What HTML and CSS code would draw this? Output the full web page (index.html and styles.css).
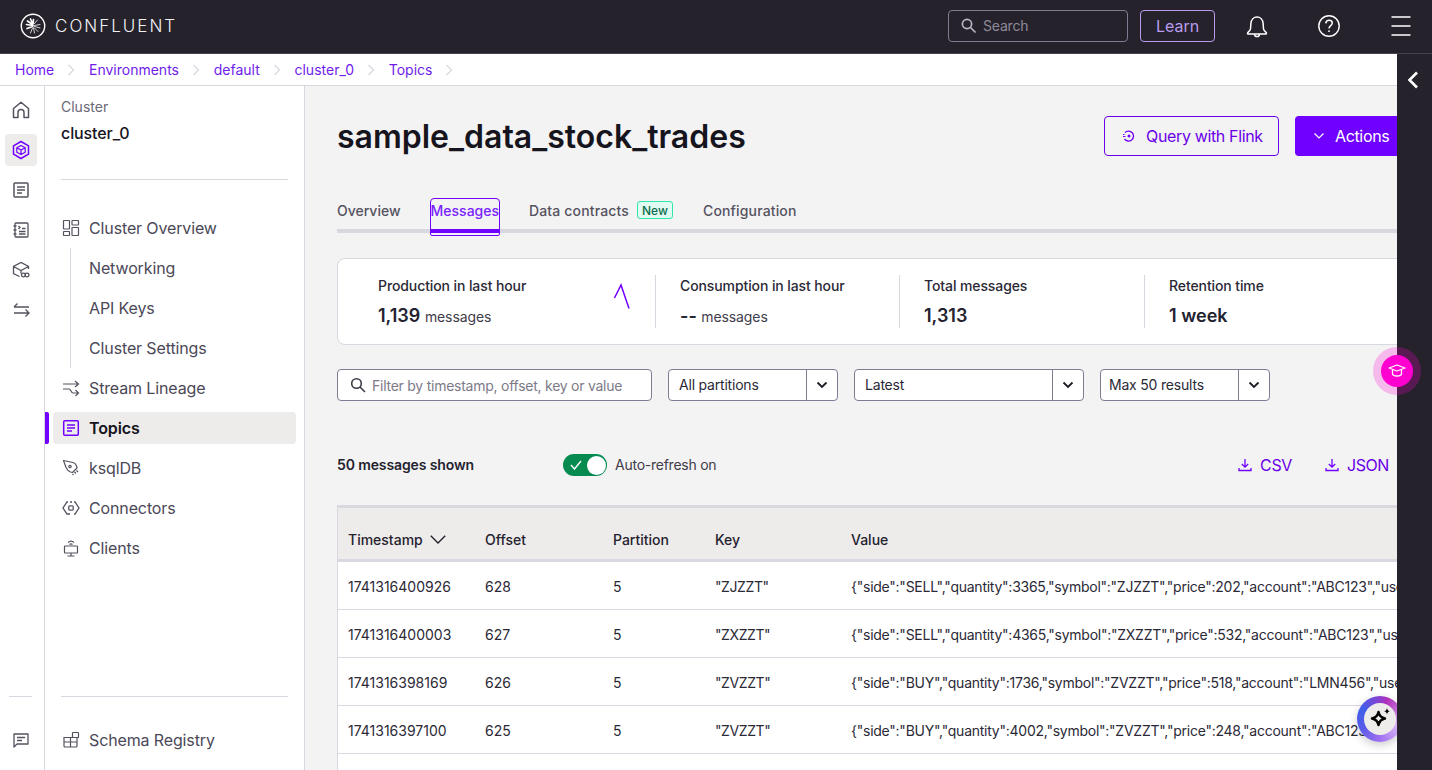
FILE: index.html
```html
<!DOCTYPE html>
<html lang="en">
<head>
<meta charset="utf-8">
<title>sample_data_stock_trades</title>
<link rel="stylesheet" href="styles.css">
</head>
<body>
<div class="app">
  <header class="topbar">
    <div class="brand">
      <svg class="logo" width="26" height="26" viewBox="0 0 26 26" fill="none" stroke="#fff" stroke-linecap="round">
        <circle cx="13" cy="13" r="11.7" stroke-width="1.4"/>
        <g stroke-width="1.7"><path d="M13 12.5 6.500 11.500M12.500 11.500 7.500 8M12.500 13.500 7 15.500M12.500 10.500 10.500 6M13 11 13.500 6.500"/></g>
        <g stroke-width=".8"><path d="M14 11 17.500 7M14.500 12.500 20 11.500M14.500 13.500 20 15M14 14.500 18 18.500M13.500 15 14.500 20M12.500 15 10.500 20"/></g>
      </svg>
      <span class="wordmark">CONFLUENT</span>
    </div>
    <div class="topbar-tools">
      <div class="global-search">
        <svg width="18" height="18" viewBox="0 0 18 18" fill="none" stroke="#b9b6c4" stroke-width="1.7"><circle cx="7" cy="7" r="4.600"/><path d="m10.500 10.500 5 5"/></svg>
        <span>Search</span>
      </div>
      <div class="learn">Learn</div>
      <svg class="tool bell" width="26" height="26" viewBox="0 0 26 26" fill="none" stroke="#fff" stroke-width="1.5" stroke-linejoin="round"><path d="M3.500 20.200c0-1.400 2.800-2 3-4.500l.4-5.200C7.200 6.700 9.800 4 13 4s5.800 2.700 6.100 6.500l.4 5.200c.2 2.500 3 3.100 3 4.500 0 .5-.3.8-.8.8H4.300c-.5 0-.8-.3-.8-.8Z"/><path d="M10.500 21c0 1.500 1.100 2.600 2.500 2.600s2.500-1.100 2.500-2.600"/></svg>
      <svg class="tool help" width="24" height="24" viewBox="0 0 24 24" fill="none" stroke="#fff" stroke-width="1.4"><circle cx="12" cy="12" r="10.200"/><path d="M8.800 9.300c.2-1.900 1.500-3 3.300-3 1.900 0 3.200 1.200 3.200 2.800 0 2.500-3.300 2.600-3.300 5.400" stroke-width="1.5"/><circle cx="12" cy="17.200" r=".9" fill="#fff" stroke="none"/></svg>
      <svg class="tool menu" width="20" height="20" viewBox="0 0 20 20" stroke="#fff" stroke-width="1.400"><path d="M.5 1h19M.5 10h19M.5 19h19"/></svg>
    </div>
  </header>

  <nav class="crumbs">
    <a>Home</a><svg class="sep" width="8" height="12" viewBox="0 0 8 12" fill="none"><path d="m1.500 1 5 5-5 5"/></svg>
    <a>Environments</a><svg class="sep" width="8" height="12" viewBox="0 0 8 12" fill="none"><path d="m1.500 1 5 5-5 5"/></svg>
    <a>default</a><svg class="sep" width="8" height="12" viewBox="0 0 8 12" fill="none"><path d="m1.500 1 5 5-5 5"/></svg>
    <a>cluster_0</a><svg class="sep" width="8" height="12" viewBox="0 0 8 12" fill="none"><path d="m1.500 1 5 5-5 5"/></svg>
    <a>Topics</a><svg class="sep" width="8" height="12" viewBox="0 0 8 12" fill="none"><path d="m1.500 1 5 5-5 5"/></svg>
  </nav>

  <div class="body-row">
    <aside class="rail">
      <div class="rail-item"><svg width="18" height="18" viewBox="0 0 18 18" fill="none" stroke="#55525f" stroke-width="1.500" stroke-linejoin="round"><path d="M1.500 16.500V7.500L9 1.200l7.500 6.300v9H12v-5a3 3 0 0 0-6 0v5Z"/></svg></div>
      <div class="rail-item rail-active"><svg width="18" height="20" viewBox="0 0 18 20" fill="none" stroke="#7000ff" stroke-width="1.500" stroke-linejoin="round"><path d="m9 1.500 7.500 4.300v8.400L9 18.500l-7.500-4.300V5.800Z"/><path d="m9 5.500 4.200 2.300v4.400L9 14.500l-4.200-2.300V7.800ZM4.800 7.800 9 10l4.200-2.200M9 10v4.500" stroke-width="1.200"/></svg></div>
      <div class="rail-item"><svg width="18" height="18" viewBox="0 0 18 18" fill="none" stroke="#55525f" stroke-width="1.500"><rect x="2" y="2" width="14" height="14" rx="1"/><path d="M5 6h8M5 9h8M5 12h5"/></svg></div>
      <div class="rail-item"><svg width="18" height="18" viewBox="0 0 18 18" fill="none" stroke="#55525f" stroke-width="1.300"><rect x="3" y="2" width="13" height="14" rx="1"/><path d="M1.500 5h3M1.500 9h3M1.500 13h3M6.500 5l1.500 1.500-1.500 1.500M10 7.500h3.500M7 10.500h6.500M7 13h6.500"/></svg></div>
      <div class="rail-item"><svg width="18" height="18" viewBox="0 0 18 18" fill="none" stroke="#55525f" stroke-width="1.300"><path d="M7.500 15.500 1.500 12.500V5.500L9 1.500l7.500 4v2.500M1.500 5.500 9 9.500l7.500-4M9 9.500v3"/><rect x="9.500" y="12.200" width="4" height="3.600" rx="1.800"/><rect x="13" y="12.200" width="4" height="3.600" rx="1.800"/></svg></div>
      <div class="rail-item"><svg width="18" height="18" viewBox="0 0 18 18" fill="none" stroke="#55525f" stroke-width="1.300"><path d="M17 6H2M5.500 2.500 2 6M2 12h15M13.500 8.500 17 12l-3.500 3.500"/></svg></div>
      <div class="rail-bottom">
        <svg width="18" height="18" viewBox="0 0 18 18" fill="none" stroke="#55525f" stroke-width="1.300" stroke-linejoin="round"><path d="M2 3h14v10H5l-3 3Z"/><path d="M5 6.500h8M5 9.500h5"/></svg>
      </div>
    </aside>

    <aside class="sidebar">
      <div class="cluster-label">Cluster</div>
      <div class="cluster-name">cluster_0</div>
      <div class="side-rule"></div>
      <ul class="nav">
        <li class="nav-item"><svg width="18" height="18" viewBox="0 0 18 18" fill="none" stroke="#55525f" stroke-width="1.200"><rect x="1.500" y="1.500" width="6" height="8.500" rx=".5"/><rect x="10" y="1.500" width="6.500" height="4.500" rx=".5"/><rect x="1.500" y="12.500" width="6" height="4" rx=".5"/><rect x="10" y="8.500" width="6.500" height="8" rx=".5"/></svg><span>Cluster Overview</span></li>
        <li class="subnav">
          <div class="nav-item sub"><span>Networking</span></div>
          <div class="nav-item sub"><span>API Keys</span></div>
          <div class="nav-item sub"><span>Cluster Settings</span></div>
        </li>
        <li class="nav-item"><svg width="18" height="18" viewBox="0 0 18 18" fill="none" stroke="#55525f" stroke-width="1.200"><path d="M1 5h15M13 2l3.500 3L13 8M1 10h6c2 0 2 4 4 4h5.500M13.500 11l3 3-3 3"/></svg><span>Stream Lineage</span></li>
        <li class="nav-item active"><svg width="18" height="18" viewBox="0 0 18 18" fill="none" stroke="#7000ff" stroke-width="1.500"><rect x="1.700" y="1.700" width="14.600" height="14.600" rx="1"/><path d="M5 6h8M5 9h8M5 12h5"/></svg><span>Topics</span></li>
        <li class="nav-item"><svg width="18" height="18" viewBox="0 0 18 18" fill="none" stroke="#55525f" stroke-width="1.200" stroke-linejoin="round"><path d="M1.500 1.500 11 3.500c1.500.3 3 2 3.500 3.500l.5 2-4.500 4.500-2-.5C7 12.500 5 10.500 4 8.500Z"/><circle cx="8" cy="7.500" r="1.200"/><path d="m12.500 13 1.500 1.500M14.500 11.500 16 13M10.500 15l1 1"/></svg><span>ksqlDB</span></li>
        <li class="nav-item"><svg width="18" height="18" viewBox="0 0 18 18" fill="none" stroke="#55525f" stroke-width="1.300"><path d="M6 3H5L1 9l4 6h3M12 3h1l4 6-4 6h-1M8 3l2 0"/><rect x="6.800" y="6.800" width="4.400" height="4.400" rx="1"/></svg><span>Connectors</span></li>
        <li class="nav-item"><svg width="18" height="18" viewBox="0 0 18 18" fill="none" stroke="#55525f" stroke-width="1.200"><rect x="2.500" y="7" width="13" height="7" rx=".5"/><path d="M9 14v3M5.500 17h7M6 3.500a4.500 4.500 0 0 1 6 0M7.500 5.500a2.200 2.200 0 0 1 3 0"/></svg><span>Clients</span></li>
      </ul>
      <div class="side-bottom">
        <div class="side-rule flush"></div>
        <div class="nav-item"><svg width="18" height="18" viewBox="0 0 18 18" fill="none" stroke="#55525f" stroke-width="1.200"><path d="M2 6.500h6.500V16H3a1 1 0 0 1-1-1ZM2 11h13M8.500 6.500H15V15a1 1 0 0 1-1 1H8.500"/><rect x="10.500" y="1.500" width="6" height="5" rx=".6"/></svg><span>Schema Registry</span></div>
      </div>
    </aside>

    <main class="main">
      <div class="title-row">
        <h1>sample_data_stock_trades</h1>
        <div class="title-actions">
          <div class="btn btn-outline"><svg width="14" height="14" viewBox="0 0 14 14" fill="none" stroke="#7000ff" stroke-width="1.300"><path d="M3 3.500A5 5 0 1 1 2.500 10"/><circle cx="7" cy="7" r="1.500" fill="#7000ff" stroke="none"/><path d="M1 7.500h2.500M1 5.500h1.500" stroke-width="1"/></svg><span>Query with Flink</span></div>
          <div class="btn btn-solid"><svg width="12" height="12" viewBox="0 0 12 12" fill="none" stroke="#fff" stroke-width="1.200"><path d="m1.500 3.500 4.500 4.500 4.500-4.500"/></svg><span>Actions</span></div>
        </div>
      </div>

      <div class="tabs">
        <div class="tab tab-tight">Overview</div>
        <div class="tab tab-tight tab-active">Messages</div>
        <div class="tab">Data contracts<span class="badge">New</span></div>
        <div class="tab">Configuration</div>
      </div>

      <section class="stats">
        <div class="stat first">
          <div class="stat-label">Production in last hour</div>
          <div class="stat-value">1,139 <small>messages</small></div>
          <svg class="spark" width="18" height="26" viewBox="0 0 18 26" fill="none" stroke="#7000ff" stroke-width="1.500"><path d="m1.500 15 6.500-13 8 23.500"/></svg>
        </div>
        <div class="stat">
          <div class="stat-label">Consumption in last hour</div>
          <div class="stat-value">-- <small>messages</small></div>
        </div>
        <div class="stat">
          <div class="stat-label">Total messages</div>
          <div class="stat-value">1,313</div>
        </div>
        <div class="stat">
          <div class="stat-label">Retention time</div>
          <div class="stat-value">1 week</div>
        </div>
      </section>

      <div class="filters">
        <div class="field search"><svg width="16" height="16" viewBox="0 0 16 16" fill="none" stroke="#3d3a47" stroke-width="1.600"><circle cx="6.500" cy="6.500" r="4.800"/><path d="m10 10 5 5"/></svg><span>Filter by timestamp, offset, key or value</span></div>
        <div class="field select w-partitions"><span>All partitions</span><i><svg width="12" height="8" viewBox="0 0 12 8" fill="none" stroke="#1e1c27" stroke-width="1.800"><path d="m1.500 1.500 4.500 4.500 4.500-4.500"/></svg></i></div>
        <div class="field select w-latest"><span>Latest</span><i><svg width="12" height="8" viewBox="0 0 12 8" fill="none" stroke="#1e1c27" stroke-width="1.800"><path d="m1.500 1.500 4.500 4.500 4.500-4.500"/></svg></i></div>
        <div class="field select w-max"><span>Max 50 results</span><i><svg width="12" height="8" viewBox="0 0 12 8" fill="none" stroke="#1e1c27" stroke-width="1.800"><path d="m1.500 1.500 4.500 4.500 4.500-4.500"/></svg></i></div>
      </div>

      <div class="list-bar">
        <strong>50 messages shown</strong>
        <div class="toggle"><svg width="12" height="10" viewBox="0 0 12 10" fill="none" stroke="#fff" stroke-width="1.400"><path d="m1 5 3.500 4L11 1"/></svg><b></b></div>
        <span class="toggle-label">Auto-refresh on</span>
        <div class="downloads">
          <a><svg width="14" height="14" viewBox="0 0 14 14" fill="none" stroke="#7000ff" stroke-width="1.300"><path d="M7 1v8M3.800 6 7 9.200 10.200 6M1 10v2.500h12V10"/></svg>CSV</a>
          <a><svg width="14" height="14" viewBox="0 0 14 14" fill="none" stroke="#7000ff" stroke-width="1.300"><path d="M7 1v8M3.800 6 7 9.200 10.200 6M1 10v2.500h12V10"/></svg>JSON</a>
        </div>
      </div>

      <div class="table">
        <div class="tr th">
          <div class="sort">Timestamp<svg width="16" height="9" viewBox="0 0 16 9" fill="none" stroke="#1e1c27" stroke-width="1.300"><path d="m.8.8 7.200 7.200L15.200.8"/></svg></div><div>Offset</div><div>Partition</div><div>Key</div><div>Value</div>
        </div>
        <div class="tr"><div>1741316400926</div><div>628</div><div>5</div><div class="key">"ZJZZT"</div><div class="val">{"side":"SELL","quantity":3365,"symbol":"ZJZZT","price":202,"account":"ABC123","userid":"User_4"}</div></div>
        <div class="tr"><div>1741316400003</div><div>627</div><div>5</div><div class="key">"ZXZZT"</div><div class="val">{"side":"SELL","quantity":4365,"symbol":"ZXZZT","price":532,"account":"ABC123","userid":"User_7"}</div></div>
        <div class="tr"><div>1741316398169</div><div>626</div><div>5</div><div class="key">"ZVZZT"</div><div class="val">{"side":"BUY","quantity":1736,"symbol":"ZVZZT","price":518,"account":"LMN456","userid":"User_2"}</div></div>
        <div class="tr"><div>1741316397100</div><div>625</div><div>5</div><div class="key">"ZVZZT"</div><div class="val">{"side":"BUY","quantity":4002,"symbol":"ZVZZT","price":248,"account":"ABC123","userid":"User_9"}</div></div>
        <div class="tr empty"></div>
      </div>
    </main>
  </div>

  <div class="ai-button"><svg width="26" height="26" viewBox="0 0 26 26" fill="none" stroke="#000" stroke-width="2.500" stroke-linejoin="round"><path d="M11.500 6c.8 4 2.700 5.700 6.500 6.500-3.800.8-5.700 2.500-6.500 6.500-.8-4-2.700-5.700-6.500-6.500 3.800-.8 5.700-2.500 6.500-6.500Z"/><path d="M20 2c.3 2 1.200 3 3.200 3.300-2 .3-2.900 1.200-3.200 3.200-.3-2-1.200-2.900-3.200-3.200 2-.3 2.900-1.300 3.200-3.300Z" fill="#000" stroke="none"/></svg></div>
  <aside class="dock"><svg width="12" height="18" viewBox="0 0 12 18" fill="none" stroke="#fff" stroke-width="2.600"><path d="M10 1.500 2.500 9l7.500 7.500"/></svg></aside>
  <div class="learn-fab"><span><svg width="18" height="16" viewBox="0 0 18 16" fill="none" stroke="#fff" stroke-width="1.300" stroke-linejoin="round"><path d="M1 5 9 2l8 3-8 3Z"/><path d="M4.500 7v3.500c0 1.400 2 2.500 4.500 2.500s4.500-1.100 4.500-2.500V7"/></svg></span></div>
</div>
</body>
</html>
```

FILE: styles.css
```css
* { box-sizing: border-box; }
html, body { margin: 0; height: 100%; overflow: hidden; }
body { font-family: Inter, "Liberation Sans", sans-serif; color: #1e1c27; background: #fff; }
ul { list-style: none; margin: 0; padding: 0; }

.app { position: relative; width: 1432px; height: 770px; display: flex; flex-direction: column; overflow: hidden; }

.topbar { height: 54px; flex: none; background: #25222b; border-bottom: 1px solid #45424f; display: flex; align-items: center; padding: 0 0 2px 20px; }
.brand { display: flex; align-items: center; gap: 9px; }
.wordmark { color: #f2f1f4; font-size: 17px; font-weight: 300; letter-spacing: 2px; line-height: 20px; }
.topbar-tools { display: flex; align-items: center; margin-left: auto; padding-right: 21px; }
.global-search { width: 180px; height: 32px; border: 1px solid #807b8f; border-radius: 4px; display: flex; align-items: center; gap: 5px; padding-left: 11px; color: #8f8b9c; font-size: 14px; letter-spacing: -.2px; }
.learn { width: 75px; height: 32px; margin-left: 12px; border: 1px solid #b99cf0; border-radius: 4px; color: #b99cf0; font-size: 16px; display: flex; align-items: center; justify-content: center; }
.tool { display: block; }
.bell { margin-left: 29px; }
.help { margin-left: 47px; }
.menu { margin-left: 50px; }

.crumbs { height: 32px; flex: none; background: #fff; border-bottom: 1px solid #d9d7df; display: flex; align-items: center; padding: 0 0 0 15px; font-size: 14px; }
.sep { stroke: #d9d7df; stroke-width: 1.200; margin: 0 13.750px 0 13px; }
.crumbs a { color: #6f1ceb; }

.body-row { flex: 1; min-height: 0; display: flex; }

.rail { width: 45px; flex: none; background: #fff; border-right: 1px solid #d9d7df; display: flex; flex-direction: column; padding-top: 4px; }
.rail-item { height: 40px; flex: none; display: flex; align-items: center; justify-content: center; padding-right: 2px; position: relative; z-index: 0; }
.rail-active::before { content: ""; position: absolute; left: 5px; top: 4px; width: 32px; height: 32px; border-radius: 4px; background: #eeecea; z-index: -1; }
.rail-bottom { margin: auto 12px 0 9px; border-top: 1px solid #d9d7df; height: 74px; display: flex; align-items: center; justify-content: center; padding: 13px 0 0 0; width: 23px; }

.sidebar { width: 260px; flex: none; background: #fff; border-right: 1px solid #d9d7df; display: flex; flex-direction: column; padding-top: 12px; position: relative; }
.cluster-label { margin-left: 16px; font-size: 14px; line-height: 17px; color: #6b6877; }
.cluster-name { margin: 8px 0 0 16px; font-size: 16px; line-height: 20px; font-weight: 450; letter-spacing: -.1px; color: #16141d; }
.side-rule { margin: 36px 16px 0; height: 1px; background: #d9d7df; }
.side-rule.flush { margin-top: 0; }
.nav { margin-top: 28px; }
.nav-item { height: 40px; display: flex; align-items: center; gap: 9px; padding-left: 17px; font-size: 16px; letter-spacing: -.13px; color: #4b4857; position: relative; }
.nav-item.sub { padding-left: 44px; }
.subnav { margin-left: 0; position: relative; }
.subnav::before { content: ""; position: absolute; left: 25px; top: 0; bottom: 0; width: 1px; background: #d9d7df; }
.nav-item.active { font-weight: 600; color: #16141d; }
.nav-item.active::before { content: ""; position: absolute; left: 8px; right: 8px; top: 4px; bottom: 4px; background: #eeecea; border-radius: 4px; }
.nav-item.active::after { content: ""; position: absolute; left: 0; top: 4px; bottom: 4px; width: 4px; background: #7000ff; border-radius: 0 2px 2px 0; }
.nav-item > * { position: relative; z-index: 1; }
.side-bottom { margin-top: auto; height: 74px; display: flex; flex-direction: column; }
.side-bottom .nav-item { margin-top: 23px; }

.main { flex: 1; min-width: 0; background: #f3f3f3; padding: 30px 0 0 32px; overflow: hidden; }
.title-row { height: 40px; width: 1078px; display: flex; align-items: center; justify-content: space-between; }
h1 { margin: 1px 0 0; font-size: 32px; line-height: 40px; font-weight: 600; color: #16141d; }
.title-actions { display: flex; gap: 16px; }
.btn { height: 40px; border-radius: 4px; display: flex; align-items: center; font-size: 16px; letter-spacing: -.35px; }
.btn-outline { width: 175px; border: 1px solid #6a00e8; color: #6a00e8; padding-left: 17px; gap: 10px; }
.btn-solid { width: 120px; background: #7000ff; color: #fff; padding-left: 18px; gap: 10px; }

.tabs { margin-top: 42px; height: 35px; width: 1100px; display: flex; border-bottom: 4px solid #d9d7df; font-size: 14px; font-weight: 500; letter-spacing: .15px; color: #55525f; }
.tab { height: 31px; display: flex; align-items: center; padding-bottom: 7px; margin-right: 30px; position: relative; white-space: nowrap; }
.tab-tight { letter-spacing: 0; }
.tab-active { color: #7a22ff; }
.tab-active::after { content: ""; position: absolute; left: -1px; right: -1px; top: 0; height: 36px; border: 1px solid #7000ff; border-radius: 4px 4px 2px 2px; }
.tab-active::before { content: ""; position: absolute; left: 0; right: 0; top: 31px; height: 4px; background: #7000ff; }
.badge { margin-left: 8px; width: 36px; height: 18px; border: 1px solid #2ee6ae; border-radius: 3px; background: #e2fbf2; color: #0c6b4c; font-size: 12px; font-weight: 500; letter-spacing: 0; display: flex; align-items: center; justify-content: center; }

.stats { margin-top: 25px; height: 87px; width: 1100px; background: #fff; border: 1px solid #d9d7df; border-radius: 8px; display: flex; padding: 16px 0; }
.stat { width: 244px; padding-left: 24px; border-left: 1px solid #d9d7df; position: relative; }
.stat:nth-child(3) { width: 245px; }
.stat.first { width: 317px; padding-left: 40px; border-left: 0; }
.stat-label { font-size: 14px; line-height: 20px; font-weight: 500; letter-spacing: -.1px; color: #2b2936; padding-top: 1px; height: 21px; }
.stat-value { margin-top: 9px; font-size: 18px; line-height: 22px; font-weight: 600; color: #24222f; }
.stat-value small { font-size: 14px; font-weight: 400; letter-spacing: -.1px; color: #3f3c4a; }
.spark { position: absolute; left: 275px; top: 8px; }

.filters { margin-top: 24px; display: flex; gap: 16px; }
.field { height: 32px; background: #fff; border: 1px solid #807b93; border-radius: 4px; display: flex; align-items: center; font-size: 14px; letter-spacing: -.2px; color: #2b2936; }
.field > span { padding-bottom: 1px; }
.search { width: 315px; padding-left: 12px; gap: 6px; color: #7d7a88; letter-spacing: -.25px; }
.field.search > span { padding-bottom: 0; }
.select { justify-content: space-between; padding-left: 10px; }
.select i { width: 31px; height: 100%; border-left: 1px solid #807b93; display: flex; align-items: center; justify-content: center; }
.w-partitions { width: 170px; }
.w-latest { width: 230px; }
.w-max { width: 170px; padding-left: 8px; }

.list-bar { margin-top: 48px; height: 32px; width: 1052px; display: flex; align-items: center; font-size: 14px; }
.list-bar strong { width: 226px; font-weight: 600; letter-spacing: -.12px; color: #24222f; padding-bottom: 1px; }
.toggle { width: 44px; height: 22px; border-radius: 11px; background: #058a50; display: flex; align-items: center; justify-content: space-between; padding: 0 1px 0 7px; }
.toggle b { width: 19px; height: 19px; border-radius: 50%; background: #fff; }
.toggle-label { margin-left: 8px; color: #3f3c4a; letter-spacing: -.25px; padding-bottom: 1px; }
.downloads { margin-left: auto; display: flex; gap: 33px; }
.downloads a { display: flex; align-items: center; gap: 8px; font-size: 16px; letter-spacing: -.4px; color: #6a00e8; }

.table { margin-top: 24px; width: 1100px; border-left: 1px solid #d9d7df; background: #fff; }
.tr { height: 48px; display: grid; grid-template-columns: 137px 128px 102px 136px 1fr; align-items: center; padding: 2px 0 0 10px; border-bottom: 1px solid #d9d7df; font-size: 14px; color: #2b2936; }
.th { height: 57px; background: #eeecea; border-top: 3px solid #d9d7df; border-bottom: 3px solid #d9d7df; font-weight: 500; color: #24222f; padding-top: 12px; }
.sort { display: flex; align-items: center; gap: 7px; }
.key { letter-spacing: -.4px; }
.val { white-space: nowrap; overflow: hidden; letter-spacing: -.25px; }

.dock { position: absolute; right: 0; top: 54px; bottom: 0; width: 35px; background: #25222b; display: flex; justify-content: center; align-items: flex-start; padding: 17px 4px 0 0; z-index: 3; }
.ai-button { position: absolute; left: 1357px; top: 696px; width: 46px; height: 46px; border-radius: 50%; background: conic-gradient(from 20deg, #b02fb8 0deg, #d9b6f5 90deg, #a070f0 160deg, #5a5ae8 220deg, #3f5ee8 280deg, #8a3fd0 340deg, #b02fb8 360deg); box-shadow: 0 3px 10px rgba(0,0,0,.2); display: flex; align-items: center; justify-content: center; z-index: 2; }
.ai-button::before { content: ""; position: absolute; inset: 7px; border-radius: 50%; background: #eeecea; }
.ai-button svg { position: relative; }
.learn-fab { position: absolute; left: 1373px; top: 347px; width: 48px; height: 48px; border-radius: 50%; background: rgba(255,0,214,.24); display: flex; align-items: center; justify-content: center; z-index: 4; }
.learn-fab span { width: 32px; height: 32px; border-radius: 50%; background: #ff00d0; display: flex; align-items: center; justify-content: center; }
```
